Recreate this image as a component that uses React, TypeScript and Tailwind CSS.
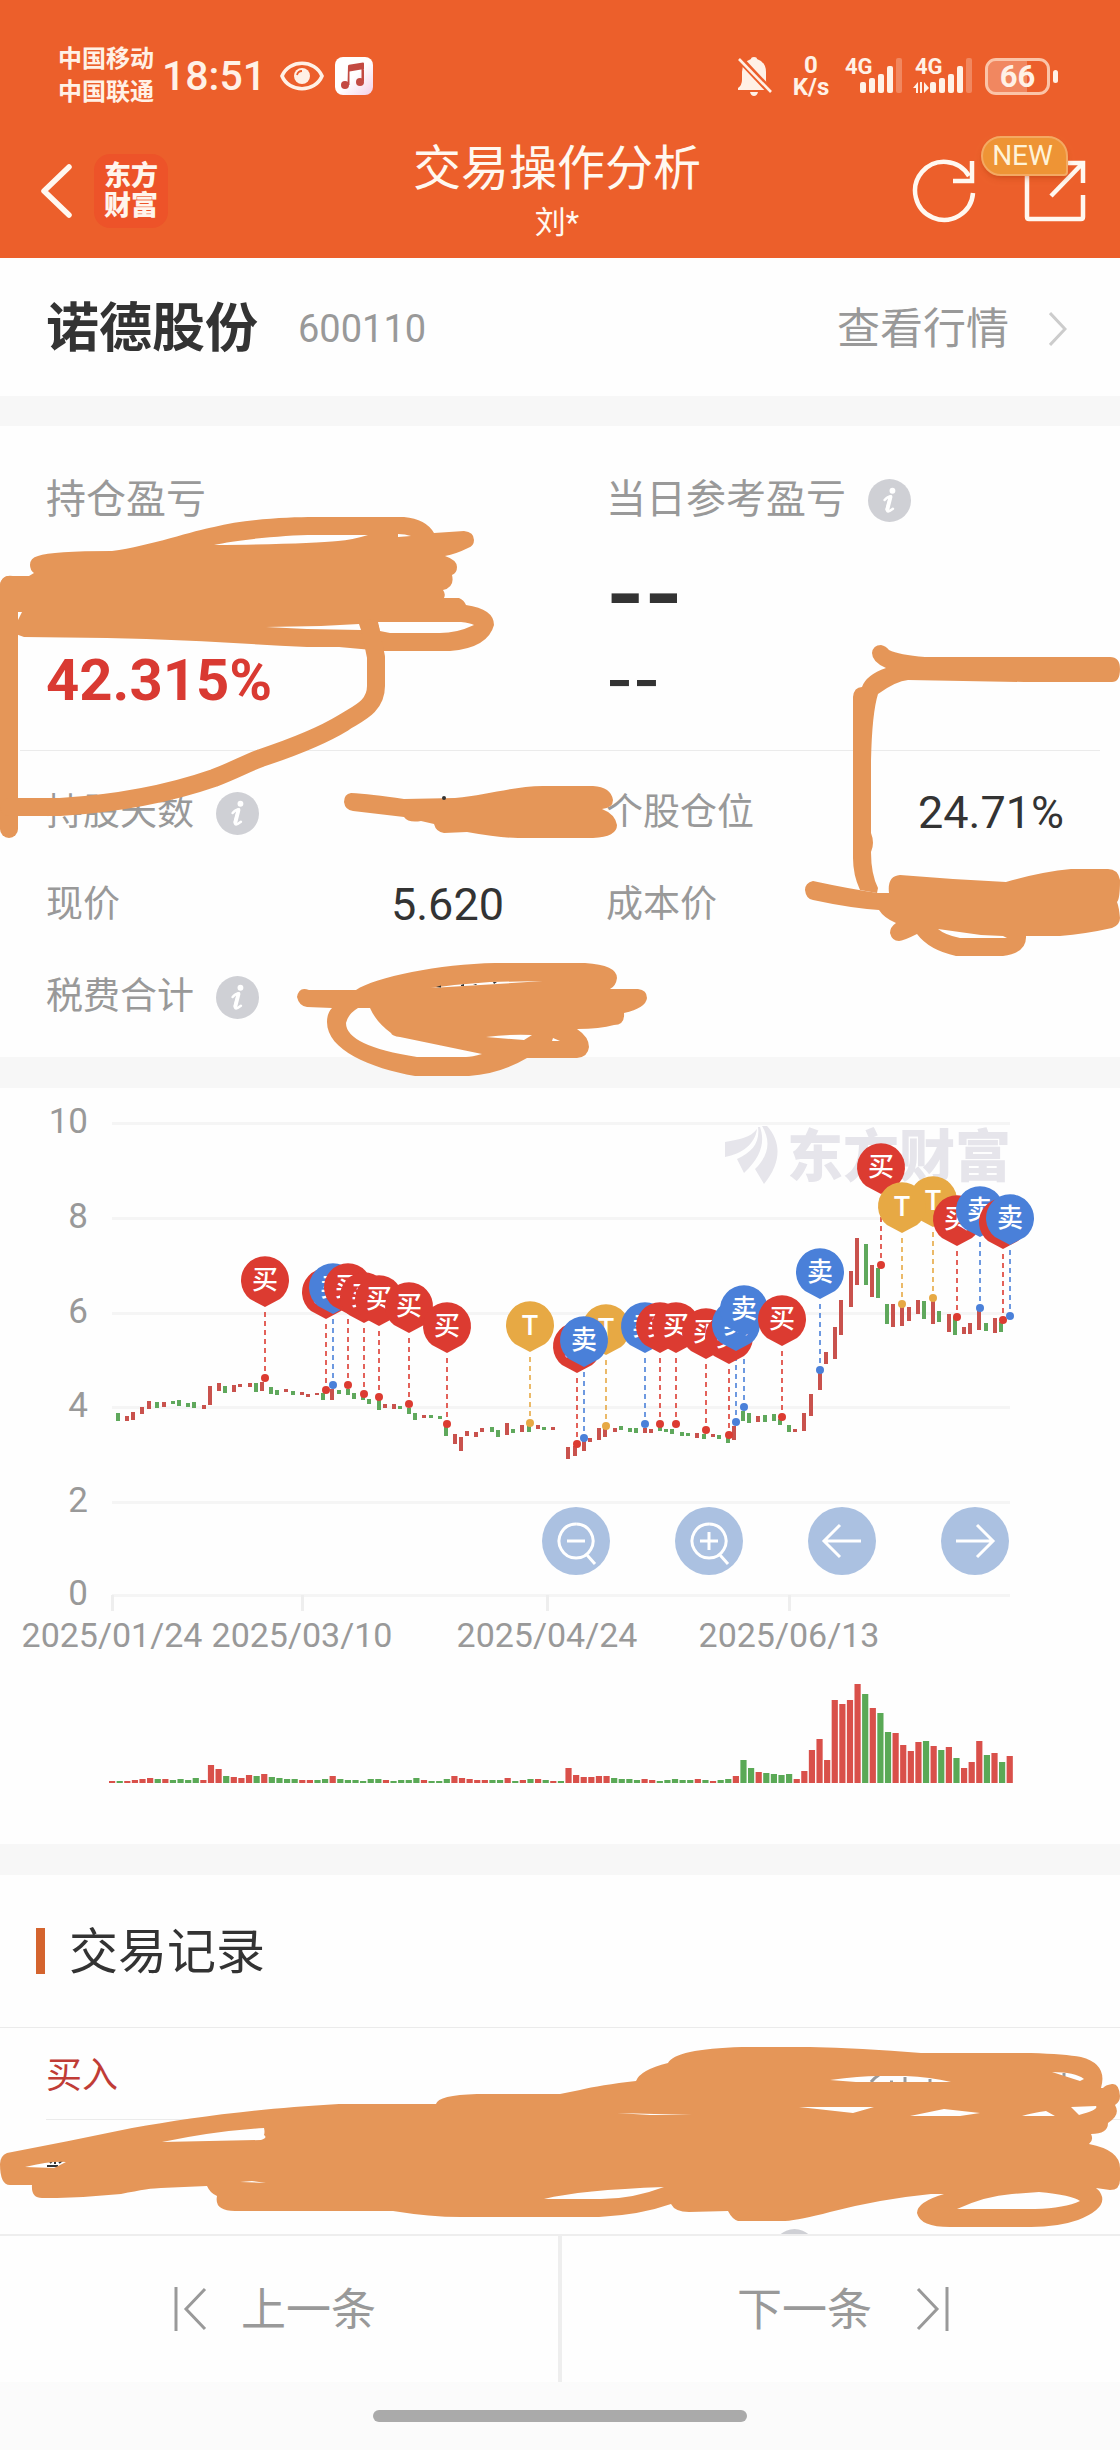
import React from 'react';

const RED = '#dc3b31';
const BLUE = '#4a80d9';
const GOLD = '#e7a944';
const CANDLE_RED = '#c9524d';
const CANDLE_GREEN = '#5fa85c';

type Kind = 'buy' | 'sell' | 't';

/* colour, x, top, bottom */
const CANDLES = `
G118 1413 1421;R127 1416 1421;R133 1412 1420;R142 1407 1414;R149 1401 1409;G157 1402 1408;R164 1402 1407;
G173 1401 1404;G179 1400 1406;G188 1403 1407;G194 1402 1408;R204 1405 1409;R210 1386 1405;R219 1383 1391;
G225 1386 1393;R234 1385 1392;R240 1384 1387;R250 1383 1387;G256 1383 1392;R262 1382 1391;G271 1387 1394;
G277 1390 1395;R286 1389 1392;G293 1391 1395;R302 1392 1395;R308 1394 1397;R317 1393 1395;G323 1393 1400;
R332 1389 1400;G339 1390 1394;G348 1389 1395;G354 1393 1399;G363 1396 1400;G369 1399 1404;G379 1400 1410;
R385 1404 1408;R394 1404 1409;G400 1406 1409;G409 1408 1414;G415 1413 1420;R424 1415 1418;G431 1415 1418;
G440 1416 1419;G446 1427 1436;R455 1434 1444;R461 1437 1451;R467 1431 1436;R476 1432 1437;R482 1428 1432;
G492 1427 1432;G498 1430 1437;R507 1423 1435;G513 1429 1433;R522 1425 1432;G529 1426 1432;R538 1425 1429;
G544 1427 1430;R553 1427 1430;R568 1447 1459;R575 1446 1456;R584 1441 1451;R590 1438 1442;R599 1428 1440;
R605 1429 1437;R615 1428 1432;G621 1426 1430;G630 1428 1432;G636 1428 1433;R645 1428 1433;R651 1429 1433;
G660 1427 1431;G666 1429 1432;G672 1429 1434;G682 1432 1436;G688 1433 1436;R697 1433 1438;G704 1434 1439;
R713 1434 1437;G719 1435 1439;G728 1437 1443;R734 1426 1440;G743 1411 1421;G749 1413 1423;R758 1416 1422;
G765 1415 1422;G774 1414 1421;G780 1419 1425;G789 1425 1432;R795 1429 1432;R804 1413 1431;R811 1394 1416;
R820 1373 1390;R826 1352 1364;R835 1327 1359;R841 1300 1335;R851 1271 1307;R857 1238 1285;G866 1244 1285;
R872 1265 1297;G878 1268 1298;G887 1304 1324;R893 1304 1327;R902 1304 1326;R909 1307 1321;R918 1300 1314;
G924 1301 1319;R933 1299 1324;G939 1311 1322;R949 1314 1332;G955 1317 1335;R964 1327 1334;R970 1323 1334;
R979 1310 1330;G986 1323 1331;R995 1318 1333;G1001 1322 1332`
  .trim()
  .split(/;\s*/)
  .map((s) => {
    const [x, top, bottom] = s.slice(1).split(' ').map(Number);
    return { fill: s[0] === 'R' ? CANDLE_RED : CANDLE_GREEN, x, top, bottom };
  });

const VOLUMES = `R2 G2 R2 R3 R4 R5 G4 R4 G3 G4 G3 G5 R3 R18 R14 G7 R6 R5 R8 G7 R9 G6 G5 G4 G4 R3 R3 G3 G4 R7
G4 G3 G3 G2 G4 G4 R3 G2 G3 G3 G5 R3 G2 G2 G4 R7 R5 R4 R3 R3 G3 G3 R5 G2 R3 G4 R4 G3 R2 G2
R15 R8 R6 R6 R7 R7 G5 G4 G4 G3 R4 R3 G2 G3 G4 G3 G3 R4 G3 R2 G3 G4 R7 G23 G15 R11 G10 G9 G8 G9
R4 R12 R33 R44 R23 R83 R79 R83 R99 G89 R75 G70 G51 R50 R38 R32 R41 G42 R37 G33 R36 G25 R15 R21 R42 G28 R30 G21 R27`
  .split(/\s+/)
  .map((s) => ({ fill: s[0] === 'R' ? '#d9504a' : '#5aa956', h: Number(s.slice(1)) }));

const PINS: [Kind, number, number][] = [
  ['buy', 265, 1378], ['buy', 326, 1390], ['sell', 333, 1385], ['buy', 348, 1385], ['buy', 364, 1394],
  ['buy', 379, 1397], ['buy', 409, 1404], ['buy', 447, 1424], ['t', 530, 1423], ['t', 606, 1426],
  ['buy', 577, 1444], ['sell', 584, 1438], ['sell', 645, 1424], ['buy', 660, 1424], ['buy', 676, 1424],
  ['buy', 706, 1430], ['buy', 729, 1435], ['sell', 736, 1422], ['sell', 744, 1407], ['buy', 782, 1417],
  ['sell', 820, 1370], ['buy', 881, 1265], ['t', 933, 1298], ['t', 902, 1304], ['buy', 957, 1317],
  ['sell', 980, 1308], ['buy', 1003, 1320], ['sell', 1010, 1316],
];

const PIN_STYLE: Record<Kind, { fill: string; label: string }> = {
  buy: { fill: RED, label: '买' },
  sell: { fill: BLUE, label: '卖' },
  t: { fill: GOLD, label: 'T' },
};

const Y_AXIS: [string, number][] = [['10', 1123], ['8', 1218], ['6', 1313], ['4', 1407], ['2', 1502], ['0', 1595]];
const X_AXIS: [string, number][] = [['2025/01/24', 112], ['2025/03/10', 302], ['2025/04/24', 547], ['2025/06/13', 789]];

function InfoIcon() {
  return (
    <button type="button" aria-label="说明" className="shrink-0">
      <svg viewBox="0 0 44 44" className="block size-[43px]">
        <circle cx="22" cy="22" r="22" fill="#cfd0d5" />
        <circle cx="25" cy="12" r="3" fill="#fff" />
        <path d="M17 21.5 Q20 18 23 18 L19.5 30 Q18.5 36 25.5 30.5" fill="none" stroke="#fff" strokeWidth="2.6" strokeLinecap="round" />
        <path d="M23 18.5 L19.8 31" stroke="#fff" strokeWidth="4" strokeLinecap="round" />
      </svg>
    </button>
  );
}

function Signal({ data }: { data?: boolean }) {
  return (
    <div className="relative h-[38px] w-[54px]">
      <span className="absolute top-0 -left-1 text-[22px] leading-[20px] font-bold">4G</span>
      <svg viewBox="6 0 54 38" className="block h-[38px] w-[54px] overflow-visible" fill="#fff1e6">
        {data && <path d="M0 31 L5 25 V36 H3 V31Z M7 25 H9 V36 H7Z M11 25 L16 31 L11 36Z" />}
        <rect x="17" y="25" width="6" height="11" rx="2" />
        <rect x="26" y="21" width="6" height="15" rx="2" />
        <rect x="35" y="17" width="6" height="19" rx="2" />
        <rect x="44" y="9" width="6" height="27" rx="2" />
        <rect x="53" y="1" width="6" height="35" rx="2" opacity=".28" />
      </svg>
    </div>
  );
}

function StatusBar() {
  return (
    <div className="flex h-[66px] items-center justify-between pr-[62px] pl-[58px] text-[#fff1e6]">
      <div className="flex items-center">
        <div className="text-2xl leading-[33px] font-bold">
          <div>中国移动</div>
          <div>中国联通</div>
        </div>
        <span className="ml-2 text-[41px] leading-[48px] font-medium">18:51</span>
        <svg viewBox="0 0 44 30" className="ml-[14px] h-[30px] w-[44px]" fill="none" stroke="#fff1e6">
          <path d="M2 15 C9 -2 35 -2 42 15 C35 32 9 32 2 15Z" strokeWidth="3.6" />
          <circle cx="22" cy="15" r="8" fill="#fff1e6" stroke="none" />
          <path d="M17 14 Q18 10 22 10" stroke="#ec5f2b" strokeWidth="1.8" />
        </svg>
        <svg viewBox="0 0 38 38" className="ml-[11px] size-[38px]">
          <defs>
            <linearGradient id="music" x1="0" y1="0" x2="1" y2="1">
              <stop offset=".5" stopColor="#fff" />
              <stop offset="1" stopColor="#f3cfe6" />
            </linearGradient>
          </defs>
          <rect width="38" height="38" rx="8" fill="url(#music)" />
          <path d="M13 9 Q13 8 14 7.700 L28 5.500 Q29 5.500 29 6.500 V12 L14.500 14.500 V28 H12.500Z M26.500 8 H29 V24 H26.500Z" fill="#c34a42" />
          <circle cx="10" cy="28" r="4" fill="#c34a42" />
          <circle cx="25" cy="25" r="4" fill="#c34a42" />
        </svg>
      </div>
      <div className="flex items-center">
        <svg viewBox="0 0 36 40" className="h-[40px] w-[36px]">
          <path d="M17 1 Q20 1 20 3 Q29 6 29 16 V24 Q29 30 33 33 V34 H1 V32 Q5 29 5 24 V16 Q5 6 14 3 Q14 1 17 1Z M13 36 H21 Q20 40 17 40 Q14 40 13 36Z" fill="#fff1e6" />
          <path d="M2 2 L34 36" stroke="#ec5f2b" strokeWidth="7" />
          <path d="M2 3 L34 36" stroke="#fff1e6" strokeWidth="2.600" />
        </svg>
        <div className="ml-4 w-[44px] text-center text-2xl leading-[22px] font-bold">
          <div>0</div>
          <div>K/s</div>
        </div>
        <div className="ml-4"><Signal /></div>
        <div className="ml-4"><Signal data /></div>
        <div className="ml-3 flex items-center">
          <div className="relative h-[37px] w-[65px] overflow-hidden rounded-[11px] border-[3px] border-[#fbc4a8] text-center text-[31px] leading-[32px] font-bold">
            <div className="absolute inset-y-0 left-0 w-2/3 bg-white/25" />
            <span className="relative">66</span>
          </div>
          <div className="ml-[3px] h-[13px] w-[5px] rounded-full bg-[#fff1e6]" />
        </div>
      </div>
    </div>
  );
}

function NavBar() {
  return (
    <div className="mt-[30px] grid h-[104px] grid-cols-[1fr_auto_1fr] items-center pr-[34px] pl-7">
      <div className="flex items-center gap-2">
        <button type="button" aria-label="返回" className="px-[13px]">
          <svg viewBox="0 0 32 54" className="block h-[54px] w-[32px]" fill="none" stroke="#fff8f0" strokeWidth="5.500" strokeLinecap="round" strokeLinejoin="round">
            <path d="M28 3 L3 27 L28 51" />
          </svg>
        </button>
        <div className="flex size-[74px] flex-col items-center justify-center rounded-2xl bg-[#ed5329] text-[27px] leading-[30px] font-black text-[#fff5ec]">
          <span>东方</span>
          <span>财富</span>
        </div>
      </div>
      <div className="text-center text-[#fff8f0]">
        <h1 className="text-5xl leading-[60px]">交易操作分析</h1>
        <div className="mt-1 text-[31px] leading-10">刘*</div>
      </div>
      <div className="flex items-center justify-end gap-12">
        <button type="button" aria-label="刷新">
          <svg viewBox="0 0 64 64" className="block size-[64px]" fill="none" stroke="#fff8f0" strokeWidth="4.500">
            <path d="M61 34 A29 29 0 1 1 57 17" />
            <path d="M60 2 V22 H41" />
          </svg>
        </button>
        <button type="button" aria-label="分享" className="relative">
          <svg viewBox="0 0 62 62" className="block size-[62px]" fill="none" stroke="#fff8f0" strokeWidth="4.500">
            <path d="M3 12 V57 Q3 59 5 59 H57 Q59 59 59 57 V35" />
            <path d="M40 3 H59 V23" />
            <path d="M27 36 L58 4" />
          </svg>
          <span className="absolute -top-6 -left-[43px] h-[40px] w-[87px] rounded-[20px] rounded-br-sm border-2 border-[#f4a962] bg-[#ee9435] pr-1 text-[28px] leading-9 text-[#fff3d8] shadow-md shadow-orange-800/25">
            NEW
          </span>
        </button>
      </div>
    </div>
  );
}

function Metric({ label, info, value }: { label: string; info?: boolean; value?: string }) {
  return (
    <div className="flex h-[92px] items-center justify-between pr-14 pl-[46px]">
      <dt className="flex items-center gap-[22px] text-[37px] leading-[48px] text-[#999]">
        {label}
        {info && <InfoIcon />}
      </dt>
      <dd className="text-[45px] leading-[48px] text-[#333]">{value}</dd>
    </div>
  );
}

const INK = '#e59658';

function MetricsScribble() {
  return (
    <svg viewBox="0 426 1120 631" className="pointer-events-none absolute inset-0 z-10 w-full overflow-visible" fill={INK} fillRule="evenodd" aria-hidden="true">
      <path
        d="M30 565 Q30 558 38 556 Q52 551 112 551 C150 546 195 530 214 527 C245 519 290 517 314 517 H404 Q426 519 434 533 L464 531 Q474 532 474 540 Q474 546 468 548 Q456 554 445 556 Q457 560 457 567 Q457 573 452 575 Q455 587 443 590 Q446 594 444 598 H459 Q464 600 466 605 Q494 609 494 625 Q488 648 450 651 H383 L339 647 H307 C240 644 180 639 107 638 L24 637 Q0 630 0 605 V585 Q2 574 13 576 H29 L34 573 Q30 570 30 565Z
        M214 545 C235 540 285 535 314 535 L368 535 Q352 540 338 541 Q310 544 214 545Z
        M398 534 Q405 534 411 536 L398 537Z
        M378 622 L461 622 Q470 623 474 625 Q455 634 436 633 L390 633 L380 631Z
        M266 627 L321 626 L359 624 L361 630 L307 629Z
        M18 612 L22 612 L18 620Z"
      />
      <g fill="none" stroke={INK} strokeWidth="18" strokeLinecap="round" strokeLinejoin="round">
        <path d="M9 585 V829" />
        <path d="M9 807 H60 C110 804 165 795 214 778 C235 770 245 764 261 758 C300 745 325 734 343 723 C356 714 376 708 376 686 V657 L370 628" />
      </g>
      <path d="M872 653 Q873 645 881 645 Q886 646 889 650 Q899 655 925 657 H1110 Q1120 657 1120 669 Q1120 682 1112 682 H1024 L908 680 Q896 681 878 694 Q872 713 871 761 V833 Q875 843 871 852 Q871 874 878 888 L877 893 L860 890 Q853 875 853 858 V697 Q854 687 862 687 Q866 675 886 668 Q872 662 872 653Z" />
      <path
        d="M813 881 Q805 883 805 890 Q806 899 813 900 Q850 908 879 910 Q884 918 896 923 Q890 927 890 933 Q892 941 899 941 Q903 941 917 934 Q929 950 956 956 H1003 Q1027 953 1026 936 H1060 Q1085 934 1112 928 Q1120 925 1120 918 Q1119 907 1117 902 Q1120 899 1120 880 Q1118 869 1108 869 H1071 Q1040 872 1006 882 L953 879 L900 875 Q887 876 889 893 L878 893 Q850 889 813 881Z
        M938 929 L981 935 L1003 936 L1007 938 H960 Q945 935 938 929Z"
      />
      <path d="M351 793 Q344 794 344 802 Q345 810 353 811 L404 817 Q408 823 421 821 L434 824 Q436 832 444 833 L467 832 Q500 838 518 838 H593 Q617 837 617 825 Q615 814 602 809 Q613 808 613 800 Q611 787 593 786 H543 C515 786 488 795 455 798 L404 799 Q370 794 351 793Z" />
      <path
        d="M297 997 Q299 986 309 990 H356 C375 977 440 964 495 963 H585 Q617 965 617 978 Q616 986 610 989 H638 Q647 990 647 998 Q646 1008 624 1013 Q625 1025 614 1025 Q600 1029 577 1029 Q589 1037 589 1047 Q588 1057 577 1058 H527 Q500 1074 469 1076 H415 C370 1068 327 1050 327 1022 Q327 1013 332 1008 L307 1007 Q299 1006 297 997Z
        M358 1008 H370 Q376 1022 391 1033 Q392 1036 400 1037 L482 1054 Q472 1057 466 1057 H417 Q346 1046 346 1023 Q348 1014 358 1008Z
        M431 988 Q460 984 490 982 L543 981 L497 984Z
        M486 1037 Q510 1034 532 1035 L524 1040Z
        M553 1038 L560 1041 L552 1041Z"
      />
      <g fill="#333">
        <circle cx="444" cy="798" r="2" />
        <path d="M436 987 l5 -1.500 v2z M461 985 l3 -1 v2h-3z M473 984 h4 l-1 1z M493 982 h4 l-3 2z" />
      </g>
    </svg>
  );
}

function RecordsScribble() {
  return (
    <svg viewBox="0 2028 1120 206" className="pointer-events-none absolute inset-0 z-10 w-full overflow-visible" aria-hidden="true">
      <g fill="none" stroke="#333" strokeWidth="2">
        <path d="M47 2166 H58 M50 2163 L53 2160 M55 2164 V2160 M59 2163 L63 2160" />
        <path d="M871 2082 Q874 2078 879 2075 M890 2082 H893 M905 2077 V2082 M930 2079 V2082 M1064 2073 V2077" stroke="#999" strokeWidth="3" />
      </g>
      <path
        fill={INK}
        fillRule="evenodd"
        d="M7 2153 Q0 2156 0 2164 Q0 2185 10 2185 H32 Q31 2198 42 2198 H57 Q90 2197 121 2194 Q150 2188 161 2188 L207 2186 Q210 2193 217 2196 Q214 2211 235 2211 H393 Q430 2217 461 2217 H599 Q640 2215 671 2204 Q675 2212 689 2212 L728 2211 Q732 2219 738 2221 H785 Q800 2220 830 2212 Q880 2199 931 2194 H944 Q917 2202 917 2213 Q920 2227 950 2227 H1031 Q1058 2227 1078 2220 Q1108 2208 1101 2194 Q1099 2190 1096 2188 L1110 2190 Q1120 2190 1120 2180 V2168 Q1120 2150 1089 2144 Q1094 2140 1091 2134 Q1108 2134 1108 2123 Q1121 2115 1115 2105 Q1120 2102 1120 2096 Q1119 2083 1112 2084 Q1105 2085 1103 2088 H1101 Q1108 2064 1081 2057 Q1065 2054 1031 2053 H921 Q860 2048 810 2047 H742 Q675 2049 668 2063 Q640 2070 636 2081 Q600 2085 580 2090 L560 2094 H477 Q438 2095 436 2104 H339 C250 2109 190 2118 132 2128 Q70 2141 7 2153Z
        M162 2142 Q215 2131 264 2128 Q265 2132 264 2135 Q268 2138 261 2140Z
        M25 2167 Q50 2161 66 2162 L54 2168Z
        M240 2182 L252 2181 L266 2183Z
        M544 2199 Q580 2190 664 2187 Q630 2200 596 2199Z
        M830 2080 Q860 2076 878 2076 H906 Q930 2077 951 2082 H856Z
        M1052 2072 Q1075 2072 1084 2079 L1080 2081Z
        M799 2107 H874 L853 2113Z
        M910 2116 L944 2109 L980 2113 L960 2116Z
        M1022 2116 Q1032 2113 1046 2111 L1055 2116Z
        M1071 2107 L1096 2106 Q1099 2110 1079 2115Z
        M957 2209 Q985 2196 1012 2194 L1039 2192 Q1072 2195 1080 2201 Q1065 2208 1035 2209Z
        M617 2113 L692 2115 L650 2115Z"
      />
    </svg>
  );
}

function Metrics() {
  return (
    <section className="relative">
      <div className="mx-5 border-b border-[#ebebeb]">
        <div className="-mx-5 grid grid-cols-2 pt-11 pb-10">
          <div className="pl-[46px]">
            <h2 className="text-[40px] leading-[60px] text-[#999]">持仓盈亏</h2>
            <div className="mt-6 h-20" />
            <div className="mt-4 text-[58px] leading-[60px] font-bold text-[#d93a32]">42.315%</div>
          </div>
          <div className="pl-[46px]">
            <h2 className="flex items-center gap-[22px] text-[40px] leading-[60px] text-[#999]">
              当日参考盈亏
              <InfoIcon />
            </h2>
            <div className="mt-6 font-['Inter'] text-[82px] leading-[80px] font-bold text-[#333]">--</div>
            <div className="mt-4 font-['Inter'] text-[58px] leading-[60px] font-semibold text-[#333]">--</div>
          </div>
        </div>
      </div>
      <dl className="grid grid-cols-2 pt-4 pb-[14px]">
        <Metric label="持股天数" info />
        <Metric label="个股仓位" value="24.71%" />
        <Metric label="现价" value="5.620" />
        <Metric label="成本价" />
        <Metric label="税费合计" info />
      </dl>
      <MetricsScribble />
    </section>
  );
}

function Chart() {
  return (
    <svg viewBox="0 1088 1120 756" className="block w-full" fontFamily="Roboto, 'Noto Sans CJK SC', sans-serif">
      {Y_AXIS.map(([label, y]) => (
        <g key={label}>
          <rect x="112" y={y - 1} width="898" height="3" fill="#f5f5f5" />
          <text x="88" y={y + 10} fontSize="35" fill="#999" textAnchor="end">{label}</text>
        </g>
      ))}
      {X_AXIS.map(([label, x]) => (
        <g key={label}>
          <rect x={x - 1} y="1595" width="3" height="16" fill="#eeeeee" />
          <text x={x} y="1647" fontSize="34" fill="#999" textAnchor="middle">{label}</text>
        </g>
      ))}
      <g fill="#e6e5eb">
        <path d="M767 1126 C781 1141 782 1162 764 1184 L755 1169 C769 1155 771 1141 762 1126Z" />
        <path d="M760 1127 C765 1141 762 1156 744 1173 L737 1159 C753 1152 760 1142 758 1127Z" />
        <path d="M757 1129 C750 1138 740 1139 725 1142 L725 1157 C742 1154 755 1144 757 1129Z" />
        <text x="787" y="1176" fontSize="56" fontWeight="900">东方财富</text>
      </g>
      {CANDLES.map((c, i) => (
        <rect key={i} x={c.x - 2} y={c.top} width="4" height={c.bottom - c.top} fill={c.fill} />
      ))}
      {PINS.map(([kind, x, y], i) => (
        <g key={i}>
          <line x1={x} x2={x} y1={y - 66} y2={y} stroke={PIN_STYLE[kind].fill} strokeWidth="1.600" strokeDasharray="5 4" />
          <circle cx={x} cy={y} r="4" fill={PIN_STYLE[kind].fill} />
        </g>
      ))}
      {PINS.map(([kind, x, y], i) => {
        const cy = y - 98;
        return (
          <g key={i}>
            <path d={`M${x} ${cy + 27} L${x - 15} ${cy + 19} A24 24 0 1 1 ${x + 15} ${cy + 19}Z`} fill={PIN_STYLE[kind].fill} />
            <text x={x} y={kind === 't' ? cy + 10 : cy + 9} fontSize={kind === 't' ? 27 : 26} fontWeight="500" fill="#fff" textAnchor="middle">
              {PIN_STYLE[kind].label}
            </text>
          </g>
        );
      })}
      {VOLUMES.map((v, i) => (
        <rect key={i} x={109 + i * 7.607} y={1783 - v.h} width="6.200" height={v.h} fill={v.fill} />
      ))}
    </svg>
  );
}

const CONTROLS = [
  { label: '缩小', d: 'M34 17 a17 17 0 1 0 .1 0 M25 34 H43 M45 48 L53 57' },
  { label: '放大', d: 'M34 17 a17 17 0 1 0 .1 0 M25 34 H43 M34 25 V43 M45 48 L53 57' },
  { label: '左移', d: 'M53 34 H17 M32 18 L16 34 L32 50' },
  { label: '右移', d: 'M15 34 H51 M36 18 L52 34 L36 50' },
];

function ChartSection() {
  return (
    <section className="relative">
      <Chart />
      <div className="absolute top-[55.400%] right-[9.900%] left-[48.400%] flex justify-between">
        {CONTROLS.map((c) => (
          <button key={c.label} type="button" aria-label={c.label} className="size-[68px] rounded-full bg-[#abc1e1]">
            <svg viewBox="0 0 68 68" className="size-full" fill="none" stroke="#fff" strokeWidth="3">
              <path d={c.d} />
            </svg>
          </button>
        ))}
      </div>
    </section>
  );
}

function Records() {
  return (
    <section>
      <div className="flex h-[153px] items-center gap-6 border-b border-[#ebebeb] pl-9">
        <div className="h-[46px] w-[9px] bg-[#d4642e]" />
        <h2 className="pt-1 text-[49px] leading-[60px] text-[#333]">交易记录</h2>
      </div>
      <div className="relative">
        <div className="ml-[46px] flex h-[92px] items-center border-b border-[#ebebeb] pt-1 text-4xl text-[#c03c36]">买入</div>
        <div className="flex h-[114px] items-end overflow-hidden pl-[69%]">
          <div className="h-[5px] overflow-hidden">
            <div className="size-[43px] rounded-full bg-[#cfd0d5]" />
          </div>
        </div>
        <RecordsScribble />
      </div>
    </section>
  );
}

function Pager() {
  return (
    <nav className="grid h-[148px] grid-cols-2 border-t-2 border-[#eee] text-[45px] leading-[60px] text-[#999]">
      <button type="button" className="flex items-center justify-center gap-[34px] border-r-2 border-[#eee] pr-2">
        <svg viewBox="0 0 33 44" className="h-[44px] w-[33px]" fill="none" stroke="#999" strokeWidth="3">
          <path d="M2 0 V44 M31 2 L12 22 L31 42" />
        </svg>
        <span className="pt-1">上一条</span>
      </button>
      <button type="button" className="flex items-center justify-center gap-11 border-l-2 border-[#eee] pl-1">
        <span className="pt-1">下一条</span>
        <svg viewBox="0 0 33 44" className="h-[44px] w-[33px]" fill="none" stroke="#999" strokeWidth="3">
          <path d="M31 0 V44 M2 2 L21 22 L2 42" />
        </svg>
      </button>
    </nav>
  );
}

function Band() {
  return <div className="h-[31px] bg-[#f7f7f7]" />;
}

export default function App() {
  return (
    <div className="w-full bg-[#fefefe] font-['Roboto','Noto_Sans_CJK_SC',sans-serif]">
      <header className="bg-[#ec5f2b] pt-[43px] pb-[15px]">
        <StatusBar />
        <NavBar />
      </header>
      <main>
        <div className="flex h-[138px] items-center justify-between pt-1 pr-[53px] pl-[46px]">
          <div className="flex items-center">
            <h2 className="text-[53px] leading-[64px] font-bold text-[#333]">诺德股份</h2>
            <span className="ml-10 text-[38px] leading-[48px] text-[#999]">600110</span>
          </div>
          <a href="#quote" className="flex items-center gap-10 text-[43px] leading-[60px] text-[#999]">
            查看行情
            <svg viewBox="0 0 18 34" className="h-[34px] w-[18px]" fill="none" stroke="#ccc" strokeWidth="3">
              <path d="M1 1 L16 17 L1 33" />
            </svg>
          </a>
        </div>
        <div className="h-[30px] bg-[#f7f7f7]" />
        <Metrics />
        <Band />
        <ChartSection />
        <Band />
        <Records />
      </main>
      <Pager />
      <div className="flex h-[68px] justify-center bg-[#fbfbfb] pt-[28px]">
        <div className="h-3 w-1/3 rounded-full bg-[#aaa]" />
      </div>
    </div>
  );
}
